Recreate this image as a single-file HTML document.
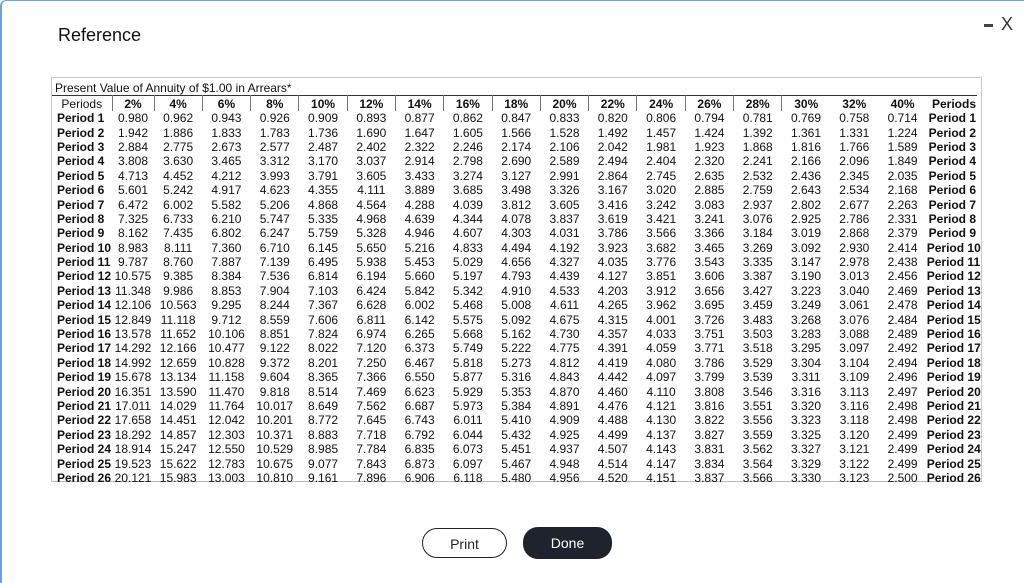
<!DOCTYPE html>
<html><head><meta charset="utf-8"><style>
body{margin:0;width:1024px;height:583px;background:#fff;font-family:"Liberation Sans",Arial,sans-serif;position:relative;overflow:hidden}
.rim{position:absolute;left:0;top:0;width:1024px;height:583px;border-left:2px solid #6f9fd6;border-top:1px solid #6f9fd6;border-top-left-radius:6px;box-sizing:border-box}
.title{position:absolute;left:58px;top:25px;font-size:18px;color:#111}
.ctl{position:absolute;left:984px;top:14px;font-size:18px;color:#333}
.ctl span{display:inline-block;width:9px;height:3px;background:#444;vertical-align:middle;margin-right:8px}
.box{position:absolute;left:51px;top:77px;width:931px;height:405px;border:1px solid #c8c8c8;border-bottom:1px solid #bbb;box-sizing:border-box}
.cap{position:absolute;left:55px;top:81px;font-size:12px;color:#111}
table{position:absolute;left:52px;top:95px;width:925px;border-collapse:collapse;table-layout:fixed;font-size:12px;color:#111}
td,th{padding:0;height:14.4px;line-height:14px;text-align:center;white-space:nowrap;overflow:visible}
th{font-weight:bold;border-top:1px solid #333;height:15px}
thead th.s{border-right:1px solid #777}
th.p0{font-weight:normal}
td.l{text-align:left;font-weight:bold;padding-left:5px}
td.r{font-weight:bold;text-align:right;padding-right:1px}
.btn{position:absolute;top:528px;height:30px;border-radius:15px;font-size:14px;line-height:30px;text-align:center;box-sizing:border-box}
</style></head><body>
<div class="rim"></div>
<div class="title">Reference</div>
<div class="ctl"><span></span>X</div>
<div class="box"></div>
<div class="cap">Present Value of Annuity of $1.00 in Arrears*</div>
<table>
<colgroup><col style="width:60px"><col style="width:42px"><col span="16" style="width:48.3px"><col style="width:50.2px"></colgroup>
<thead><tr><th class="s p0">Periods</th><th class="s">2%</th><th class="s">4%</th><th class="s">6%</th><th class="s">8%</th><th class="s">10%</th><th class="s">12%</th><th class="s">14%</th><th class="s">16%</th><th class="s">18%</th><th class="s">20%</th><th class="s">22%</th><th class="s">24%</th><th class="s">26%</th><th class="s">28%</th><th>30%</th><th>32%</th><th>40%</th><th style="text-align:right;padding-right:1px">Periods</th></tr></thead>
<tbody>
<tr><td class="l">Period 1</td><td>0.980</td><td>0.962</td><td>0.943</td><td>0.926</td><td>0.909</td><td>0.893</td><td>0.877</td><td>0.862</td><td>0.847</td><td>0.833</td><td>0.820</td><td>0.806</td><td>0.794</td><td>0.781</td><td>0.769</td><td>0.758</td><td>0.714</td><td class="r">Period 1</td></tr>
<tr><td class="l">Period 2</td><td>1.942</td><td>1.886</td><td>1.833</td><td>1.783</td><td>1.736</td><td>1.690</td><td>1.647</td><td>1.605</td><td>1.566</td><td>1.528</td><td>1.492</td><td>1.457</td><td>1.424</td><td>1.392</td><td>1.361</td><td>1.331</td><td>1.224</td><td class="r">Period 2</td></tr>
<tr><td class="l">Period 3</td><td>2.884</td><td>2.775</td><td>2.673</td><td>2.577</td><td>2.487</td><td>2.402</td><td>2.322</td><td>2.246</td><td>2.174</td><td>2.106</td><td>2.042</td><td>1.981</td><td>1.923</td><td>1.868</td><td>1.816</td><td>1.766</td><td>1.589</td><td class="r">Period 3</td></tr>
<tr><td class="l">Period 4</td><td>3.808</td><td>3.630</td><td>3.465</td><td>3.312</td><td>3.170</td><td>3.037</td><td>2.914</td><td>2.798</td><td>2.690</td><td>2.589</td><td>2.494</td><td>2.404</td><td>2.320</td><td>2.241</td><td>2.166</td><td>2.096</td><td>1.849</td><td class="r">Period 4</td></tr>
<tr><td class="l">Period 5</td><td>4.713</td><td>4.452</td><td>4.212</td><td>3.993</td><td>3.791</td><td>3.605</td><td>3.433</td><td>3.274</td><td>3.127</td><td>2.991</td><td>2.864</td><td>2.745</td><td>2.635</td><td>2.532</td><td>2.436</td><td>2.345</td><td>2.035</td><td class="r">Period 5</td></tr>
<tr><td class="l">Period 6</td><td>5.601</td><td>5.242</td><td>4.917</td><td>4.623</td><td>4.355</td><td>4.111</td><td>3.889</td><td>3.685</td><td>3.498</td><td>3.326</td><td>3.167</td><td>3.020</td><td>2.885</td><td>2.759</td><td>2.643</td><td>2.534</td><td>2.168</td><td class="r">Period 6</td></tr>
<tr><td class="l">Period 7</td><td>6.472</td><td>6.002</td><td>5.582</td><td>5.206</td><td>4.868</td><td>4.564</td><td>4.288</td><td>4.039</td><td>3.812</td><td>3.605</td><td>3.416</td><td>3.242</td><td>3.083</td><td>2.937</td><td>2.802</td><td>2.677</td><td>2.263</td><td class="r">Period 7</td></tr>
<tr><td class="l">Period 8</td><td>7.325</td><td>6.733</td><td>6.210</td><td>5.747</td><td>5.335</td><td>4.968</td><td>4.639</td><td>4.344</td><td>4.078</td><td>3.837</td><td>3.619</td><td>3.421</td><td>3.241</td><td>3.076</td><td>2.925</td><td>2.786</td><td>2.331</td><td class="r">Period 8</td></tr>
<tr><td class="l">Period 9</td><td>8.162</td><td>7.435</td><td>6.802</td><td>6.247</td><td>5.759</td><td>5.328</td><td>4.946</td><td>4.607</td><td>4.303</td><td>4.031</td><td>3.786</td><td>3.566</td><td>3.366</td><td>3.184</td><td>3.019</td><td>2.868</td><td>2.379</td><td class="r">Period 9</td></tr>
<tr><td class="l">Period 10</td><td>8.983</td><td>8.111</td><td>7.360</td><td>6.710</td><td>6.145</td><td>5.650</td><td>5.216</td><td>4.833</td><td>4.494</td><td>4.192</td><td>3.923</td><td>3.682</td><td>3.465</td><td>3.269</td><td>3.092</td><td>2.930</td><td>2.414</td><td class="r">Period 10</td></tr>
<tr><td class="l">Period 11</td><td>9.787</td><td>8.760</td><td>7.887</td><td>7.139</td><td>6.495</td><td>5.938</td><td>5.453</td><td>5.029</td><td>4.656</td><td>4.327</td><td>4.035</td><td>3.776</td><td>3.543</td><td>3.335</td><td>3.147</td><td>2.978</td><td>2.438</td><td class="r">Period 11</td></tr>
<tr><td class="l">Period 12</td><td>10.575</td><td>9.385</td><td>8.384</td><td>7.536</td><td>6.814</td><td>6.194</td><td>5.660</td><td>5.197</td><td>4.793</td><td>4.439</td><td>4.127</td><td>3.851</td><td>3.606</td><td>3.387</td><td>3.190</td><td>3.013</td><td>2.456</td><td class="r">Period 12</td></tr>
<tr><td class="l">Period 13</td><td>11.348</td><td>9.986</td><td>8.853</td><td>7.904</td><td>7.103</td><td>6.424</td><td>5.842</td><td>5.342</td><td>4.910</td><td>4.533</td><td>4.203</td><td>3.912</td><td>3.656</td><td>3.427</td><td>3.223</td><td>3.040</td><td>2.469</td><td class="r">Period 13</td></tr>
<tr><td class="l">Period 14</td><td>12.106</td><td>10.563</td><td>9.295</td><td>8.244</td><td>7.367</td><td>6.628</td><td>6.002</td><td>5.468</td><td>5.008</td><td>4.611</td><td>4.265</td><td>3.962</td><td>3.695</td><td>3.459</td><td>3.249</td><td>3.061</td><td>2.478</td><td class="r">Period 14</td></tr>
<tr><td class="l">Period 15</td><td>12.849</td><td>11.118</td><td>9.712</td><td>8.559</td><td>7.606</td><td>6.811</td><td>6.142</td><td>5.575</td><td>5.092</td><td>4.675</td><td>4.315</td><td>4.001</td><td>3.726</td><td>3.483</td><td>3.268</td><td>3.076</td><td>2.484</td><td class="r">Period 15</td></tr>
<tr><td class="l">Period 16</td><td>13.578</td><td>11.652</td><td>10.106</td><td>8.851</td><td>7.824</td><td>6.974</td><td>6.265</td><td>5.668</td><td>5.162</td><td>4.730</td><td>4.357</td><td>4.033</td><td>3.751</td><td>3.503</td><td>3.283</td><td>3.088</td><td>2.489</td><td class="r">Period 16</td></tr>
<tr><td class="l">Period 17</td><td>14.292</td><td>12.166</td><td>10.477</td><td>9.122</td><td>8.022</td><td>7.120</td><td>6.373</td><td>5.749</td><td>5.222</td><td>4.775</td><td>4.391</td><td>4.059</td><td>3.771</td><td>3.518</td><td>3.295</td><td>3.097</td><td>2.492</td><td class="r">Period 17</td></tr>
<tr><td class="l">Period 18</td><td>14.992</td><td>12.659</td><td>10.828</td><td>9.372</td><td>8.201</td><td>7.250</td><td>6.467</td><td>5.818</td><td>5.273</td><td>4.812</td><td>4.419</td><td>4.080</td><td>3.786</td><td>3.529</td><td>3.304</td><td>3.104</td><td>2.494</td><td class="r">Period 18</td></tr>
<tr><td class="l">Period 19</td><td>15.678</td><td>13.134</td><td>11.158</td><td>9.604</td><td>8.365</td><td>7.366</td><td>6.550</td><td>5.877</td><td>5.316</td><td>4.843</td><td>4.442</td><td>4.097</td><td>3.799</td><td>3.539</td><td>3.311</td><td>3.109</td><td>2.496</td><td class="r">Period 19</td></tr>
<tr><td class="l">Period 20</td><td>16.351</td><td>13.590</td><td>11.470</td><td>9.818</td><td>8.514</td><td>7.469</td><td>6.623</td><td>5.929</td><td>5.353</td><td>4.870</td><td>4.460</td><td>4.110</td><td>3.808</td><td>3.546</td><td>3.316</td><td>3.113</td><td>2.497</td><td class="r">Period 20</td></tr>
<tr><td class="l">Period 21</td><td>17.011</td><td>14.029</td><td>11.764</td><td>10.017</td><td>8.649</td><td>7.562</td><td>6.687</td><td>5.973</td><td>5.384</td><td>4.891</td><td>4.476</td><td>4.121</td><td>3.816</td><td>3.551</td><td>3.320</td><td>3.116</td><td>2.498</td><td class="r">Period 21</td></tr>
<tr><td class="l">Period 22</td><td>17.658</td><td>14.451</td><td>12.042</td><td>10.201</td><td>8.772</td><td>7.645</td><td>6.743</td><td>6.011</td><td>5.410</td><td>4.909</td><td>4.488</td><td>4.130</td><td>3.822</td><td>3.556</td><td>3.323</td><td>3.118</td><td>2.498</td><td class="r">Period 22</td></tr>
<tr><td class="l">Period 23</td><td>18.292</td><td>14.857</td><td>12.303</td><td>10.371</td><td>8.883</td><td>7.718</td><td>6.792</td><td>6.044</td><td>5.432</td><td>4.925</td><td>4.499</td><td>4.137</td><td>3.827</td><td>3.559</td><td>3.325</td><td>3.120</td><td>2.499</td><td class="r">Period 23</td></tr>
<tr><td class="l">Period 24</td><td>18.914</td><td>15.247</td><td>12.550</td><td>10.529</td><td>8.985</td><td>7.784</td><td>6.835</td><td>6.073</td><td>5.451</td><td>4.937</td><td>4.507</td><td>4.143</td><td>3.831</td><td>3.562</td><td>3.327</td><td>3.121</td><td>2.499</td><td class="r">Period 24</td></tr>
<tr><td class="l">Period 25</td><td>19.523</td><td>15.622</td><td>12.783</td><td>10.675</td><td>9.077</td><td>7.843</td><td>6.873</td><td>6.097</td><td>5.467</td><td>4.948</td><td>4.514</td><td>4.147</td><td>3.834</td><td>3.564</td><td>3.329</td><td>3.122</td><td>2.499</td><td class="r">Period 25</td></tr>
<tr><td class="l">Period 26</td><td>20.121</td><td>15.983</td><td>13.003</td><td>10.810</td><td>9.161</td><td>7.896</td><td>6.906</td><td>6.118</td><td>5.480</td><td>4.956</td><td>4.520</td><td>4.151</td><td>3.837</td><td>3.566</td><td>3.330</td><td>3.123</td><td>2.500</td><td class="r">Period 26</td></tr>
</tbody></table>
<div class="btn" style="left:422px;width:85px;border:1.5px solid #222;color:#222">Print</div>
<div class="btn" style="left:523px;width:89px;height:32px;top:527px;line-height:32px;background:#1f232e;color:#fff">Done</div>
</body></html>
